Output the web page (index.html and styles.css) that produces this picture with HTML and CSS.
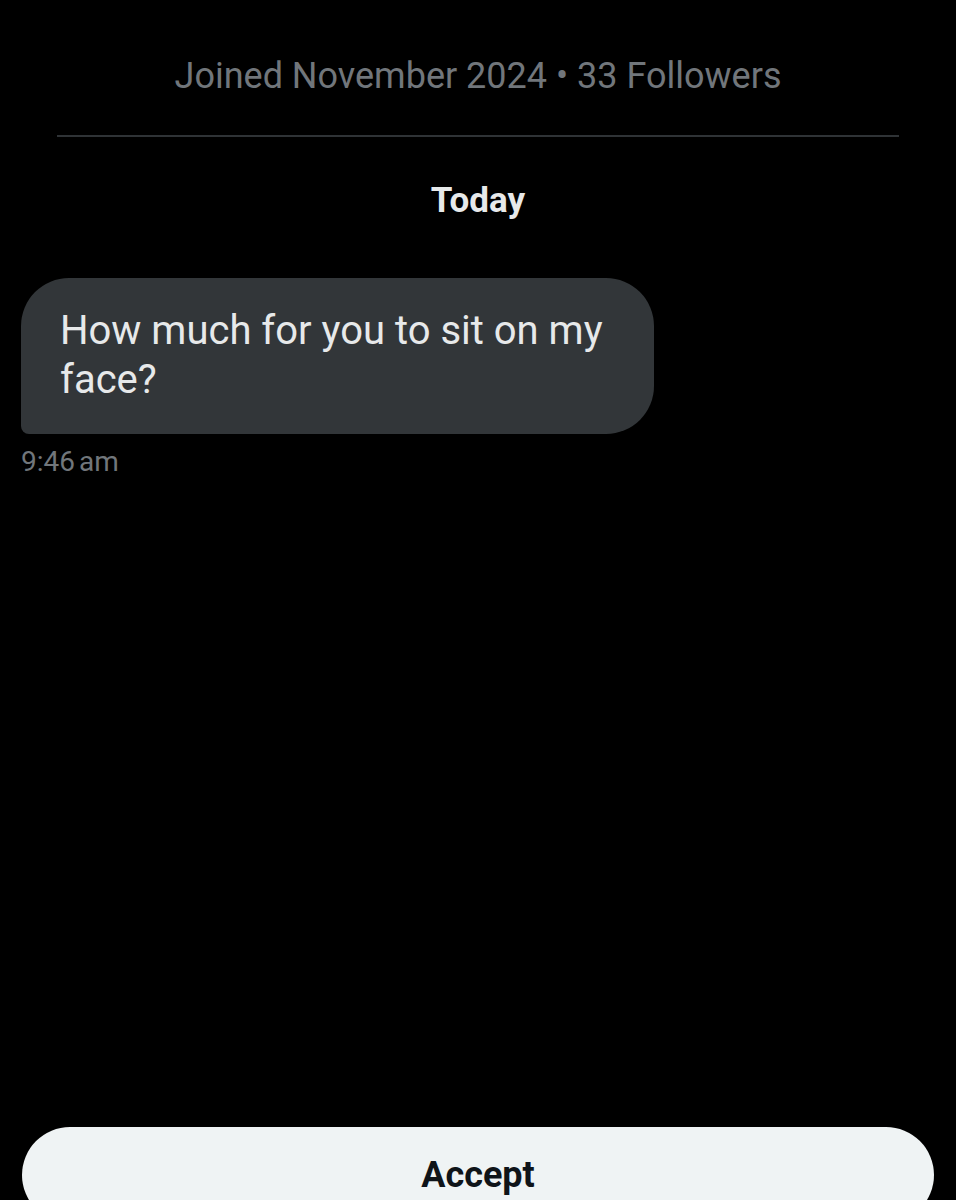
FILE: index.html
```html
<!DOCTYPE html>
<html lang="en">
<head>
    <meta charset="UTF-8">
    <meta name="viewport" content="width=device-width, initial-scale=1.0">
    <title>Messages</title>
    <link rel="stylesheet" href="styles.css">
</head>
<body>
    <div class="screen">
        <!-- Profil məlumatı -->
        <div class="profile-meta">
            <p class="joined">Joined November 2024 • 33 Followers</p>
        </div>

        <!-- Mesajlar -->
        <div class="thread">
            <p class="day">Today</p>
            <div class="message">
                <div class="bubble">How much for you to sit on my face?</div>
                <span class="time">9:46 am</span>
            </div>
        </div>

        <div class="actions">
            <button class="accept">Accept</button>
        </div>
    </div>
</body>
</html>
```

FILE: styles.css
```css
body {
    margin: 0;
    background-color: #000;
    font-family: Roboto, "Liberation Sans", Arial, sans-serif;
}
.screen {
    display: flex;
    flex-direction: column;
    height: 1200px;
    overflow: hidden;
}
.profile-meta {
    margin: 0 57px;
    padding-top: 54px;
    border-bottom: 2px solid #2f3336;
}
.joined {
    margin: 0 0 37px;
    font-size: 36px;
    line-height: 44px;
    color: #71767b;
    text-align: center;
}
.thread {
    padding: 0 21px;
}
.day {
    margin: 44px 0 57px;
    font-size: 35px;
    line-height: 40px;
    font-weight: bold;
    color: #e7e9ea;
    text-align: center;
}
.message {
    display: flex;
    flex-direction: column;
    align-items: flex-start;
}
.bubble {
    box-sizing: border-box;
    width: 633px;
    padding: 28px 30px 30px 39px;
    background-color: #323639;
    border-radius: 48px 48px 48px 8px;
    font-size: 40px;
    line-height: 49px;
    color: #e7e9ea;
}
.time {
    margin-top: 12px;
    font-size: 28px;
    line-height: 32px;
    word-spacing: -3px;
    color: #71767b;
}
.actions {
    margin-top: auto;
    margin-bottom: -23px;
    padding: 0 22px;
}
.accept {
    display: block;
    width: 100%;
    padding: 28px 0;
    border: none;
    border-radius: 50px;
    background-color: #eff3f4;
    color: #0f1419;
    font-family: Roboto, "Liberation Sans", Arial, sans-serif;
    font-size: 36px;
    line-height: 40px;
    font-weight: bold;
    cursor: pointer;
}
```
